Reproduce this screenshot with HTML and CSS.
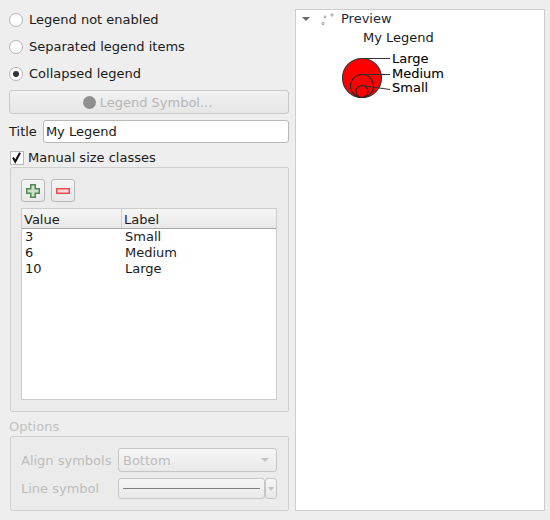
FILE: index.html
```html
<!DOCTYPE html>
<html lang="en">
<head>
<meta charset="utf-8">
<title>Legend</title>
<link rel="stylesheet" href="styles.css">
</head>
<body>
<div class="page">
  <div class="left">
    <div class="radios">
      <div class="radio-row"><span class="radio"></span><span>Legend not enabled</span></div>
      <div class="radio-row"><span class="radio"></span><span>Separated legend items</span></div>
      <div class="radio-row"><span class="radio on"></span><span>Collapsed legend</span></div>
    </div>
    <div class="symbol-btn"><span class="dot"></span><span>Legend Symbol...</span></div>
    <div class="title-row"><span>Title</span><div class="input">My Legend</div></div>
    <div class="check-row">
      <span class="check"><svg width="13" height="13" viewBox="0 0 13 13"><path d="M3 6.500 L5.300 10.500 L10 1.800" fill="none" stroke="#111" stroke-width="2.100"/></svg></span>
      <span>Manual size classes</span>
    </div>
    <div class="group classes">
      <div class="tools">
        <div class="tool"><svg width="14" height="14" viewBox="0 0 14 14"><path d="M4.750.750h4.500v4h4v4.500h-4v4h-4.500v-4h-4v-4.500h4z" fill="#cfdfcc" stroke="#4f8a55" stroke-width="1.500"/></svg></div>
        <div class="tool"><svg width="14" height="14" viewBox="0 0 14 14"><rect x=".750" y="4.750" width="12.500" height="4.500" fill="#f9dcdc" stroke="#ee4c4c" stroke-width="1.500"/></svg></div>
      </div>
      <div class="table">
        <div class="thead"><div class="th col-a">Value</div><div class="th">Label</div></div>
        <div class="tr"><div class="col-a cell">3</div><div class="cell">Small</div></div>
        <div class="tr"><div class="col-a cell">6</div><div class="cell">Medium</div></div>
        <div class="tr"><div class="col-a cell">10</div><div class="cell">Large</div></div>
      </div>
    </div>
    <div class="options-label">Options</div>
    <div class="group options">
      <div class="opt-row">
        <span class="opt-label opt-shift">Align symbols</span>
        <div class="combo"><span class="opt-shift">Bottom</span><span class="arrow"></span></div>
      </div>
      <div class="opt-row">
        <span class="opt-label">Line symbol</span>
        <div class="line-btn"><span class="line"></span></div>
        <div class="line-drop"><span class="arrow"></span></div>
      </div>
    </div>
  </div>
  <div class="preview">
    <div class="tree-row">
      <span class="twisty"></span>
      <svg class="tree-icon" width="14" height="16" viewBox="0 0 14 16"><circle cx="2" cy="12.500" r="1.200" fill="#eee" stroke="#888" stroke-width=".7"/><circle cx="4" cy="6" r="1.100" fill="#eee" stroke="#888" stroke-width=".7"/><circle cx="11" cy="4" r="1.200" fill="#eee" stroke="#888" stroke-width=".7"/></svg>
      <span class="tree-text">Preview</span>
    </div>
    <div class="legend-title">My Legend</div>
    <svg class="legend" width="120" height="52" viewBox="0 0 120 52">
      <circle cx="26" cy="29" r="19.500" fill="#ff0000" stroke="#333" stroke-width="1.100"/>
      <circle cx="26" cy="37" r="11.500" fill="#ff0000" stroke="#222" stroke-width="1.100"/>
      <circle cx="26" cy="42.500" r="6" fill="#ff0000" stroke="#222" stroke-width="1.100"/>
      <path d="M26 9.500 H54 M26 25.500 H54 M26 36.500 L54 40.500" fill="none" stroke="#333"/>
      <text class="legend-text" x="56" y="14">Large</text>
      <text class="legend-text" x="56" y="28.500">Medium</text>
      <text class="legend-text" x="56" y="43">Small</text>
    </svg>
  </div>
</div>
</body>
</html>
```
FILE: styles.css
```css
* { box-sizing: border-box; }
html, body { margin: 0; height: 100%; }
body {
  width: 550px;
  height: 520px;
  overflow: hidden;
  background: #eeeeee;
  color: #1a1a1a;
  font-family: "DejaVu Sans", sans-serif;
  font-size: 13px;
  line-height: 16px;
}
.page { display: flex; gap: 6px; padding: 9px 5px 9px 9px; height: 520px; }
.left { width: 280px; display: flex; flex-direction: column; }
.radios { display: flex; flex-direction: column; gap: 11px; padding-top: 3px; }
.radio-row { display: flex; align-items: center; gap: 6px; height: 16px; }
.radio {
  width: 14px; height: 14px; border-radius: 50%;
  background: #fff; border: 1px solid #b4b4b4;
  display: flex; align-items: center; justify-content: center;
}
.radio.on::after { content: ""; width: 6px; height: 6px; border-radius: 50%; background: #333; }
.symbol-btn {
  margin-top: 8px; height: 24px; padding: 1px 3px 0 0;
  display: flex; align-items: center; justify-content: center; gap: 4px;
  border: 1px solid #c8c8c8; border-radius: 3px;
  background: linear-gradient(#f2f2f2, #e6e6e6);
  color: #b6b6b6;
}
.dot { width: 13px; height: 13px; border-radius: 50%; background: #909090; }
.title-row { margin-top: 6px; display: flex; align-items: center; gap: 6px; height: 23px; }
.input {
  flex: 1; height: 23px; padding: 3px 2px;
  background: #fff; border: 1px solid #b8b8b8; border-radius: 3px;
}
.check-row { margin-top: 7px; height: 15px; display: flex; align-items: center; gap: 4px; padding-left: 1px; }
.check { width: 14px; height: 14px; background: #fff; border: 1px solid #b8b8b8; display: flex; }
.check svg { margin: -1px 0 0 -1px; }
.group { border: 1px solid #cfcfcf; border-radius: 2px; background: #ebebeb; margin-left: 1px; }
.classes { margin-top: 2px; height: 245px; padding: 11px 11px 11px 10px; display: flex; flex-direction: column; gap: 6px; }
.tools { display: flex; gap: 6px; }
.tool {
  width: 24px; height: 23px; display: flex; align-items: center; justify-content: center;
  border: 1px solid #b8b8b8; border-radius: 3px;
  background: linear-gradient(#f5f5f5, #e8e8e8);
}
.table { flex: 1; background: #fff; border: 1px solid #cccccc; }
.thead {
  display: flex; height: 20px; align-items: center;
  background: linear-gradient(#f6f6f6, #e8e8e8);
  border-bottom: 1px solid #a8a8a8;
}
.th { padding-left: 2px; height: 19px; line-height: 22px; }
.col-a { width: 100px; }
.th.col-a { border-right: 1px solid #cfcfcf; }
.tr { display: flex; height: 16px; }
.cell { padding-left: 3px; }
.options-label { margin-top: 6px; height: 18px; line-height: 17px; color: #c0c0c0; }
.options { flex: 1; padding: 11px 11px 0 10px; display: flex; flex-direction: column; gap: 6px; color: #bdbdbd; }
.opt-row { display: flex; align-items: center; }
.opt-label { width: 97px; }
.opt-shift { padding-top: 2px; }
.combo {
  flex: 1; height: 24px; padding: 0 5px 0 4px;
  display: flex; align-items: center; justify-content: space-between;
  border: 1px solid #c6c6c6; border-radius: 3px;
  background: linear-gradient(#f6f6f6, #e9e9e9);
}
.arrow { width: 0; height: 0; border-left: 4px solid transparent; border-right: 4px solid transparent; border-top: 4px solid #c4c4c4; margin-right: 2px; }
.line-btn {
  width: 147px; height: 21px; display: flex; align-items: center; padding: 0 4px;
  border: 1px solid #c6c6c6; border-radius: 3px;
  background: linear-gradient(#f6f6f6, #e9e9e9);
}
.line { flex: 1; border-top: 1px solid #808080; }
.line-drop {
  width: 12px; height: 21px; display: flex; align-items: center; justify-content: center;
  border: 1px solid #c6c6c6; border-radius: 3px;
  background: linear-gradient(#f6f6f6, #e9e9e9);
}
.line-drop .arrow { margin-right: 0; border-left-width: 3px; border-right-width: 3px; }
.preview { flex: 1; background: #fff; border: 1px solid #cdcdcd; padding-top: 1px; }
.tree-row { display: flex; align-items: center; height: 16px; padding-left: 6px; }
.twisty { width: 0; height: 0; border-left: 4px solid transparent; border-right: 4px solid transparent; border-top: 4px solid #6a6a6a; }
.tree-icon { margin-left: 11px; margin-right: 6px; }
.tree-text { color: #1a2a3a; }
.legend-title { margin: 3px 0 0 67px; height: 16px; color: #1a1a1a; }
.legend { display: block; margin: 3px 0 0 40px; }
.legend-text { font-family: "DejaVu Sans", sans-serif; font-size: 13px; fill: #000; stroke: #000; stroke-width: .1; }
```
